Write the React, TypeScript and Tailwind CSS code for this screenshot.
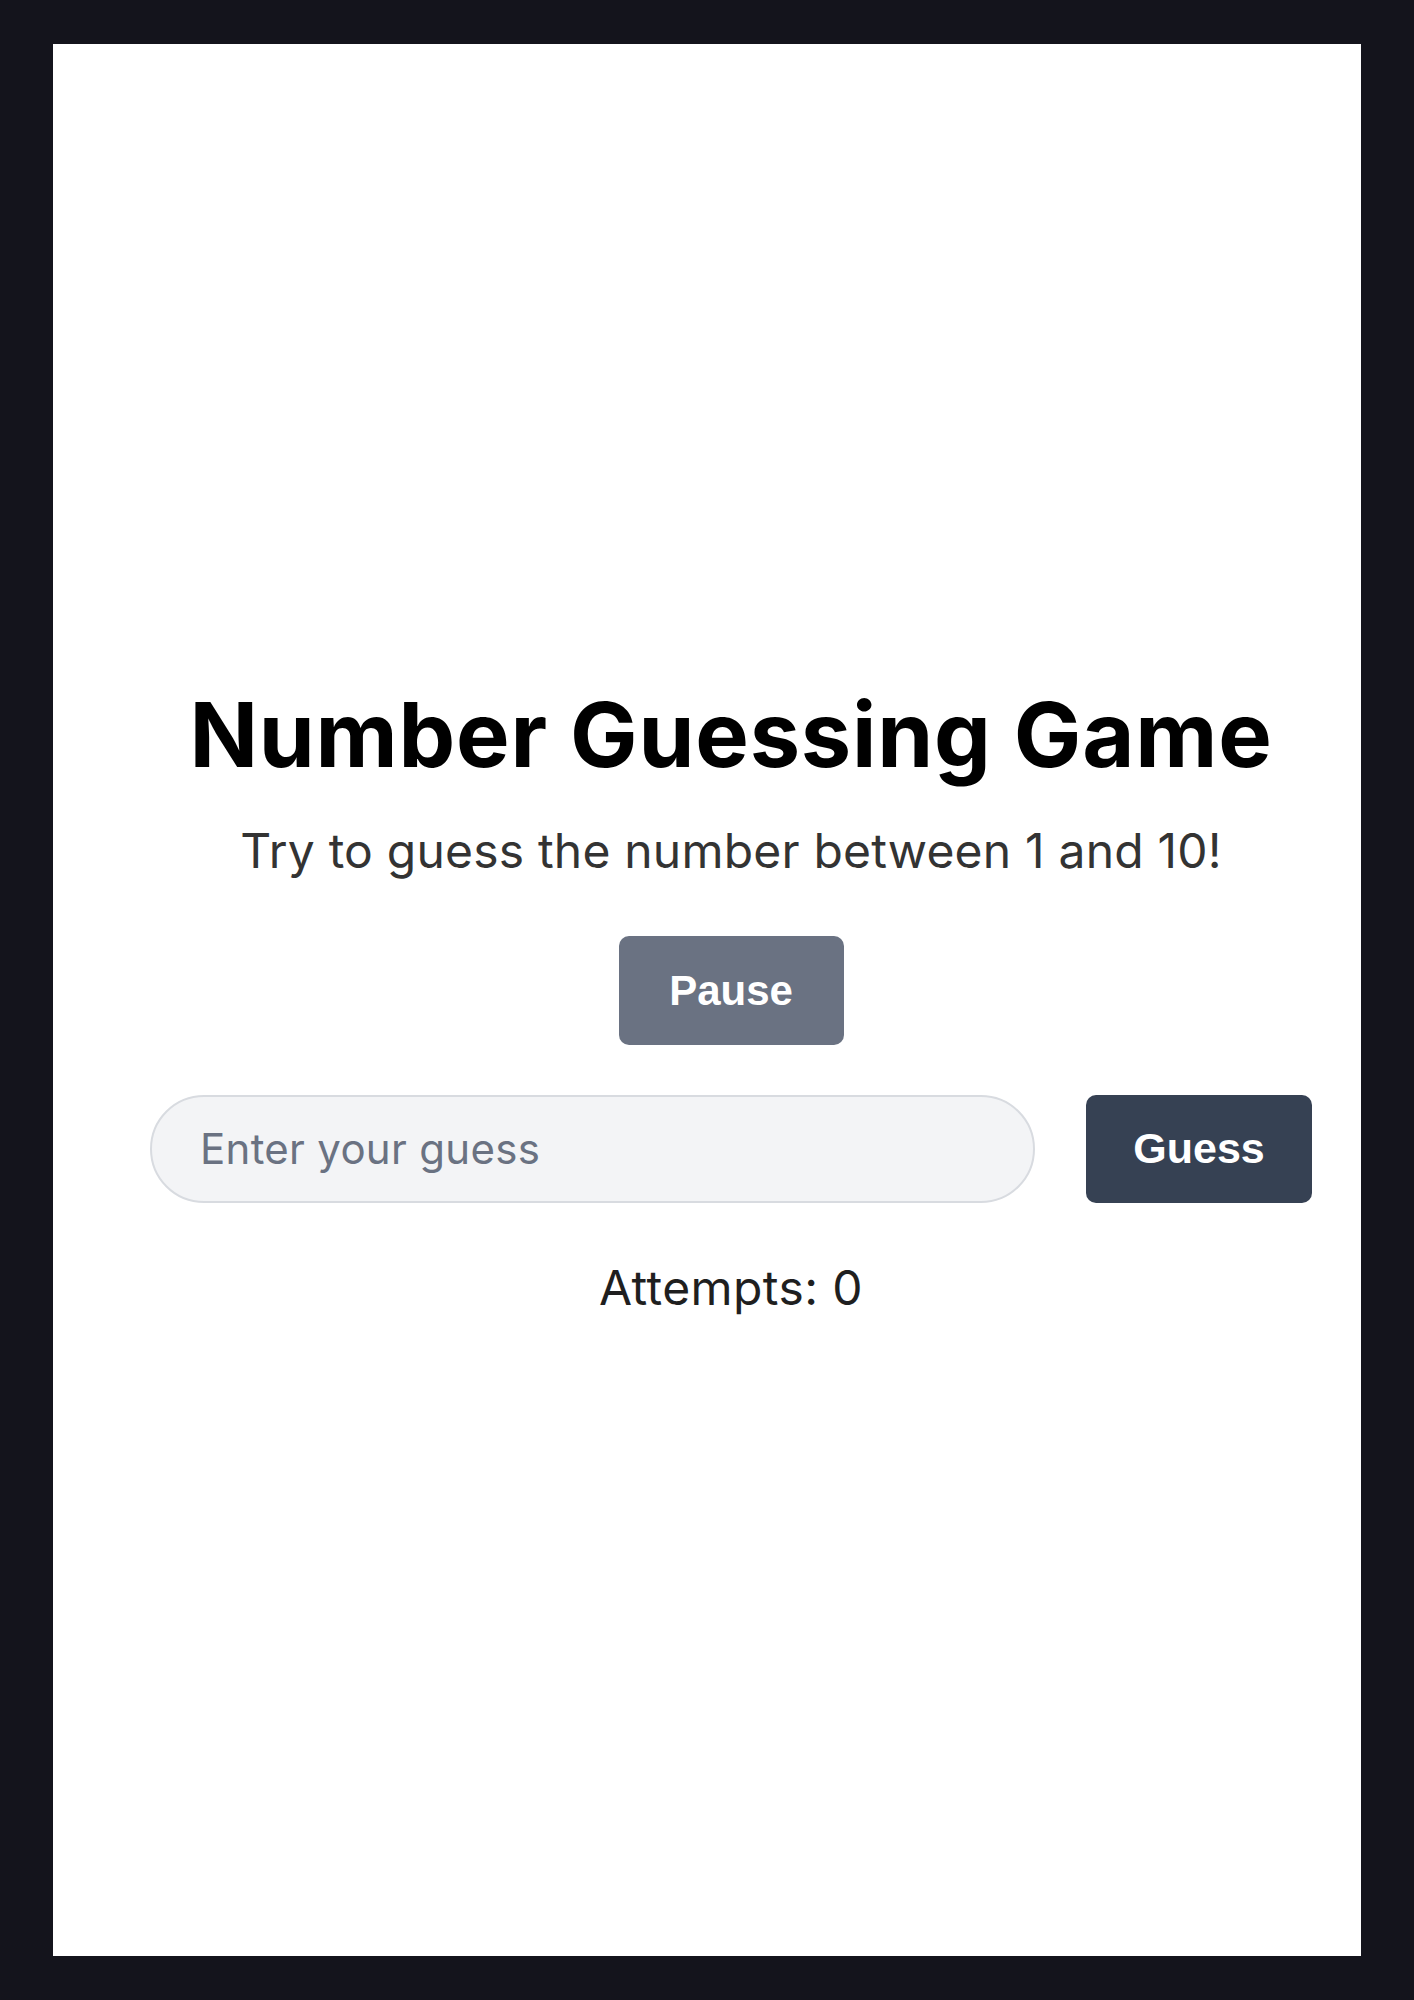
import { useState } from "react";

export default function App() {
  const [guess, setGuess] = useState<string>("");
  const [attempts, setAttempts] = useState<number>(0);
  const [paused, setPaused] = useState<boolean>(false);

  const submitGuess = () => {
    if (paused || guess === "") return;
    setAttempts(attempts + 1);
    setGuess("");
  };

  return (
    <div className="min-h-[2000px] w-full bg-[#14141c] px-[53px] py-[44px] font-['Inter',sans-serif]">
      <div className="flex h-[1912px] flex-col justify-center bg-white pl-[97px] pr-[49px]">
        <div className="flex flex-col items-center">
          <h1 className="text-[90px] font-bold leading-[90px] tracking-[0.8px] text-black">
            Number Guessing Game
          </h1>
          <p className="mt-[48px] text-[48px] leading-[46px] tracking-[0.2px] text-[#333333]">
            Try to guess the number between 1 and 10!
          </p>
          <button
            className="mt-[62px] h-[109px] w-[225px] rounded-[10px] bg-gray-500 font-['Liberation_Sans',Arial,sans-serif] text-[42px] font-bold text-white"
            onClick={() => setPaused(!paused)}
          >
            {paused ? "Resume" : "Pause"}
          </button>
          <div className="mt-[50px] flex w-full items-center gap-[51px]">
            <input
              type="number"
              value={guess}
              onChange={(e) => setGuess(e.target.value)}
              placeholder="Enter your guess"
              className="h-[108px] w-[885px] rounded-full border-2 border-[#d8dbe0] bg-gray-100 pl-[48px] text-[42px] tracking-[0.3px] text-gray-800 outline-none placeholder:text-gray-500"
            />
            <button
              className="h-[108px] w-[226px] rounded-[10px] bg-gray-700 font-['Liberation_Sans',Arial,sans-serif] text-[43px] font-bold text-white"
              onClick={submitGuess}
            >
              Guess
            </button>
          </div>
          <p className="mt-[62px] text-[48px] leading-[46px] tracking-[0.4px] text-[#1f1f1f]">
            Attempts: {attempts}
          </p>
        </div>
      </div>
    </div>
  );
}
